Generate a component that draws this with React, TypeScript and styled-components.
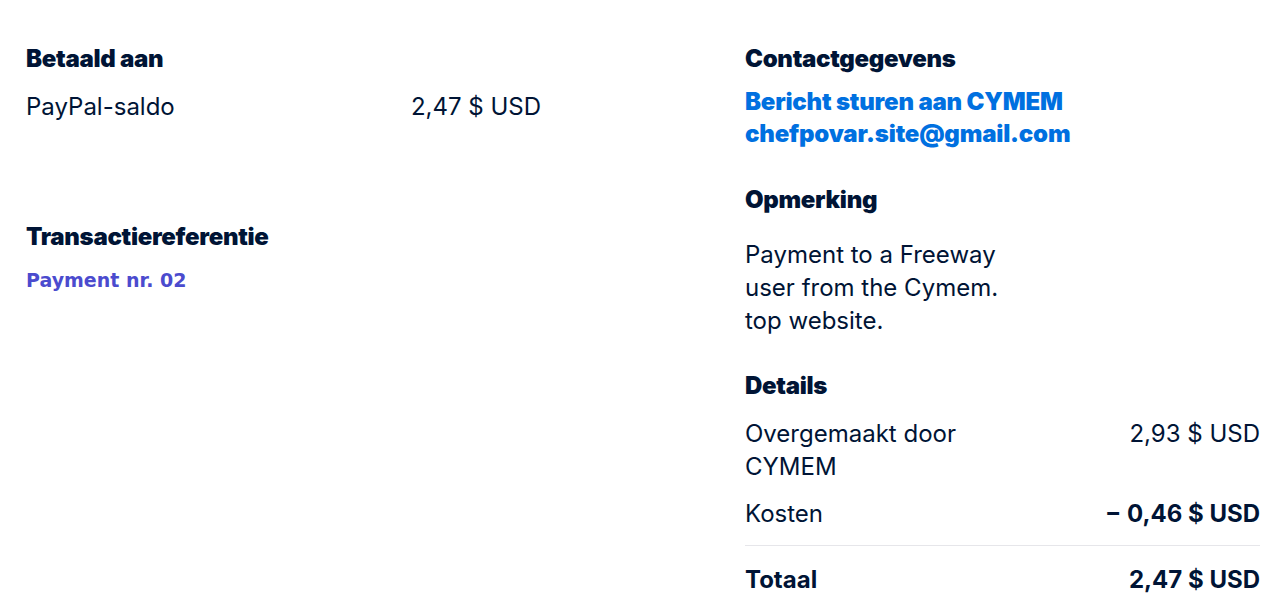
import React from 'react';
import styled, {createGlobalStyle} from 'styled-components';

const Global = createGlobalStyle`
  body {
    margin: 0;
    background: #fff;
    font-family: Inter, "Noto Sans", sans-serif;
    color: #001435;
  }
`;

const Page = styled.div`
  display: grid;
  grid-template-columns: 515px 515px;
  column-gap: 204px;
  padding: 44px 26px 0;
`;

const Column = styled.div`
  display: flex;
  flex-direction: column;
`;

const Section = styled.section<{ gap?: number }>`
  margin-bottom: ${p => p.gap ?? 0}px;
`;

const Heading = styled.h3`
  margin: 0 0 9px;
  font-size: 24px;
  line-height: 30px;
  font-weight: 900;
  letter-spacing: -0.3px;
`;

const Row = styled.div`
  display: flex;
  justify-content: space-between;
  align-items: flex-start;
  font-size: 24px;
  line-height: 33px;
  padding: 7px 0;

  > .label {
    max-width: 250px;
  }
`;

const Amount = styled.span<{ strong?: boolean }>`
  font-weight: ${p => (p.strong ? 700 : 400)};
  white-space: nowrap;
`;

const Links = styled.div`
  margin-top: 12px;
`;

const Link = styled.a`
  display: block;
  color: #0070e0;
  font-weight: 900;
  font-size: 24px;
  line-height: 32px;
  text-decoration: none;
  letter-spacing: -0.2px;
`;

const Reference = styled.div`
  margin-top: 14px;
  font-family: "DejaVu Sans", Verdana, sans-serif;
  font-weight: 700;
  font-size: 19px;
  color: #4b4bce;
  line-height: 28px;
`;

const Note = styled.p`
  margin: 23px 0 0;
  font-size: 24px;
  line-height: 33px;
  max-width: 280px;
`;

const Divider = styled.hr`
  border: none;
  border-top: 1px solid #e6e6ea;
  margin: 8px 0 10px;
`;

export default function App() {
  return (
    <>
      <Global/>
      <Page>
        <Column>
          <Section gap={92}>
            <Heading>Betaald aan</Heading>
            <Row>
              <span>PayPal-saldo</span>
              <Amount>2,47 $ USD</Amount>
            </Row>
          </Section>
          <Section>
            <Heading>Transactiereferentie</Heading>
            <Reference>Payment nr. 02</Reference>
          </Section>
        </Column>
        <Column>
          <Section gap={35}>
            <Heading>Contactgegevens</Heading>
            <Links>
              <Link href="#">Bericht sturen aan CYMEM</Link>
              <Link href="#">chefpovar.site@gmail.com</Link>
            </Links>
          </Section>
          <Section gap={34}>
            <Heading>Opmerking</Heading>
            <Note>Payment to a Freeway user from the Cymem. top website.</Note>
          </Section>
          <Section>
            <Heading>Details</Heading>
            <Row>
              <span className="label">Overgemaakt door CYMEM</span>
              <Amount>2,93 $ USD</Amount>
            </Row>
            <Row>
              <span>Kosten</span>
              <Amount strong>− 0,46 $ USD</Amount>
            </Row>
            <Divider/>
            <Row>
              <Amount strong>Totaal</Amount>
              <Amount strong>2,47 $ USD</Amount>
            </Row>
          </Section>
        </Column>
      </Page>
    </>
  );
}
